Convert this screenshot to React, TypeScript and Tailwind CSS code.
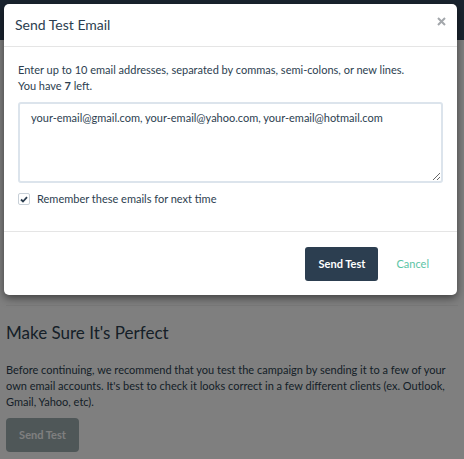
import React from "react";

export default function App() {
  return (
    <div className="relative h-[459px] w-[464px] overflow-hidden bg-white" style={{ fontFamily: "Lato, 'Open Sans', sans-serif" }}>
      <div className="h-[40px] bg-[#34495e]" />
      <div className="px-[6px]">
        <div className="mt-[265px] border-t border-[#f2f2f2]" />
        <h2 className="mt-[17px] text-[17px] leading-[20px] text-[#2c3e50]">Make Sure It's Perfect</h2>
        <p className="mt-[19px] w-[452px] text-[11px] leading-[16px] text-[#2c3e50]">
          Before continuing, we recommend that you test the campaign by sending it to a few of your own email accounts. It's best to check it looks correct in a few different clients (ex. Outlook, Gmail, Yahoo, etc).
        </p>
        <button className="mt-[8px] h-[34px] w-[73px] rounded-[4px] bg-[#9eaeb0] text-[11px] font-bold text-white">Send Test</button>
      </div>

      <div className="absolute inset-0 bg-black/50" />

      <div className="absolute left-[4px] top-[4px] w-[453px] rounded-[5px] bg-white shadow-[0_3px_9px_rgba(0,0,0,0.5)]">
        <div className="flex h-[43px] items-center justify-between border-b border-[#e5e5e5] pl-[11px] pr-[11px]">
          <h3 className="text-[14px] leading-[18px] text-[#2c3e50]">Send Test Email</h3>
          <svg width="9" height="9" viewBox="0 0 9 9" className="mb-[8px]">
            <path d="M1 1 L8 8 M8 1 L1 8" stroke="#a3a7ab" strokeWidth="2" />
          </svg>
        </div>
        <div className="px-[14px] pt-[15px] pb-[24px]">
          <p className="text-[11px] leading-[16px] text-[#2c3e50]">
            Enter up to 10 email addresses, separated by commas, semi-colons, or new lines.
            <br />
            You have <b>7</b> left.
          </p>
          <textarea
            className="mt-[8px] block h-[81px] w-[425px] resize-y rounded-[3px] border-2 border-[#dce4ec] px-[11px] py-[6px] text-[11px] leading-[16px] text-[#2c3e50] outline-none"
            defaultValue="your-email@gmail.com, your-email@yahoo.com, your-email@hotmail.com"
          />
          <label className="mt-[8px] flex h-[16px] items-center gap-[7px] text-[11px] text-[#2c3e50]">
            <span className="flex h-[12px] w-[12px] items-center justify-center rounded-[2px] border border-[#c8d0d8] bg-white">
              <svg width="8" height="7" viewBox="0 0 8 7"><path d="M1 3.5 L3 5.5 L7 1.2" stroke="#2c3e50" strokeWidth="1.8" fill="none" /></svg>
            </span>
            Remember these emails for next time
          </label>
        </div>
        <div className="flex items-center justify-end gap-[18px] border-t border-[#e5e5e5] pt-[15px] pb-[14px] pr-[28px]">
          <button className="h-[34px] w-[73px] rounded-[3px] bg-[#2c3e50] text-[11px] font-bold text-white">Send Test</button>
          <span className="text-[11px] text-[#5bc4a5]">Cancel</span>
        </div>
      </div>
    </div>
  );
}
